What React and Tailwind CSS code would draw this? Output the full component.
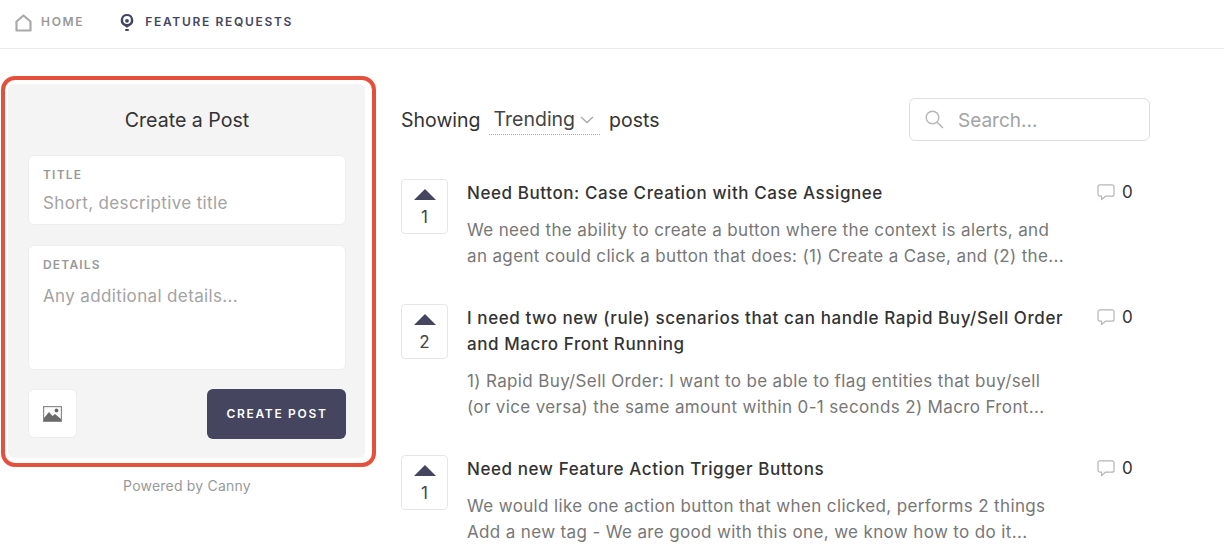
// App.jsx
function VoteBox({ count }) {
  return (
    <div className="w-[47px] h-[55px] shrink-0 rounded border border-[#e6e6e6] bg-white flex flex-col items-center pt-[9px]">
      <svg width="22" height="11" viewBox="0 0 22 11">
        <path d="M11 0 L22 11 L0 11 Z" fill="#454560" />
      </svg>
      <span className="mt-[6px] text-[17px] leading-[22px] text-[#444]">{count}</span>
    </div>
  );
}

function CommentCount() {
  return (
    <div className="w-[36px] shrink-0 flex items-center gap-[7px] text-[17px] leading-[26px] text-[#333]">
      <svg width="18" height="17" viewBox="0 0 18 17" fill="none" stroke="#b5b5b5" strokeWidth="1.200" className="shrink-0">
        <path d="M3 .8h12a2 2 0 0 1 2 2v7.400a2 2 0 0 1-2 2H8.500L4.600 15.600v-3.400H3a2 2 0 0 1-2-2V2.800a2 2 0 0 1 2-2z" strokeLinejoin="round" />
      </svg>
      0
    </div>
  );
}

function Post({ count, title, lines, className }) {
  return (
    <div className={`flex ${className}`}>
      <VoteBox count={count} />
      <div className="w-[598px] ml-[19px] shrink-0 pt-[1px]">
        <div className="text-[17px] leading-[26px] font-[550] tracking-[0.58px] text-[#333] whitespace-pre-line">{title}</div>
        <div className="mt-[11px] text-[17px] leading-[26px] tracking-[0.36px] text-[#777] whitespace-pre-line">{lines}</div>
      </div>
      <div className="ml-[32px]">
        <CommentCount />
      </div>
    </div>
  );
}

export default function App() {
  return (
    <div className="w-[1224px] h-[548px] overflow-hidden bg-white font-['Inter',sans-serif]">
      <header className="h-[49px] border-b border-[#ececec] flex items-center pl-[15px] pb-[4px] text-[12px] font-semibold tracking-[0.14em]">
        <svg width="17" height="18" viewBox="0 0 17 18" fill="none" stroke="#aaa" strokeWidth="2.200" className="mt-[2px]">
          <path d="M1.500 16.500V7.500L8.500 1.500l7 6v9z" strokeLinejoin="round" />
        </svg>
        <span className="ml-[9px] text-[#999]">HOME</span>
        <svg width="14" height="17" viewBox="0 0 14 17" className="ml-[36px]">
          <path d="M7 0a6.300 6.300 0 0 1 2.600 12L7 13.800 4.400 12A6.300 6.300 0 0 1 7 0z" fill="#454560" />
          <circle cx="7" cy="6" r="3.900" fill="#fff" />
          <circle cx="7" cy="6.800" r="1.900" fill="#454560" />
          <rect x="5" y="15" width="4" height="2" rx="1" fill="#454560" />
        </svg>
        <span className="ml-[11px] text-[#454560]">FEATURE REQUESTS</span>
      </header>

      <div className="flex items-start pt-[27px] pl-[1px]">
        <div className="w-[375px] shrink-0">
          <div className="h-[391px] rounded-[14px] border-[4px] border-[#e5503c] bg-white pt-[4px] pl-[3px] pr-[7px] pb-[5px]">
            <div className="h-full rounded-md bg-[#f4f4f4] pl-[20px] pr-[19px] flex flex-col">
              <h2 className="mt-[23px] text-center text-[19.600px] leading-[26px] font-normal text-[#333]">Create a Post</h2>
              <div className="mt-[22px] h-[70px] rounded-md bg-white border border-[#eeeeee] px-[14px] pt-[12px]">
                <div className="text-[12px] leading-[14px] font-semibold tracking-[0.1em] text-[#999]">TITLE</div>
                <div className="mt-[9px] text-[17px] leading-[24px] tracking-[0.36px] text-[#a3a3a3]">Short, descriptive title</div>
              </div>
              <div className="mt-[20px] h-[125px] rounded-md bg-white border border-[#eeeeee] px-[14px] pt-[12px]">
                <div className="text-[12px] leading-[14px] font-semibold tracking-[0.1em] text-[#999]">DETAILS</div>
                <div className="mt-[12px] text-[17px] leading-[24px] tracking-[0.36px] text-[#a3a3a3]">Any additional details...</div>
              </div>
              <div className="mt-[19px] flex items-start justify-between">
                <div className="w-[49px] h-[49px] rounded-md bg-white border border-[#eeeeee] flex items-center justify-center">
                  <svg width="19" height="16" viewBox="0 0 19 16">
                    <rect x=".6" y=".6" width="17.800" height="14.800" fill="none" stroke="#8a8a8a" strokeWidth="1.200" />
                    <path d="M1 15v-3l5-6 3.500 4 2.500-2 6 5v2z" fill="#6a6a6a" />
                    <circle cx="13.500" cy="4.500" r="1.900" fill="#6a6a6a" />
                  </svg>
                </div>
                <button className="w-[139px] h-[50px] rounded-md bg-[#454560] pl-[1px] text-white text-[12px] font-semibold tracking-[0.14em]">
                  CREATE POST
                </button>
              </div>
            </div>
          </div>
          <p className="mt-[10px] pr-[3px] text-center text-[14px] leading-[18px] tracking-[0.015em] text-[#999]">Powered by Canny</p>
        </div>

        <main className="ml-[25px] w-[749px]">
          <div className="h-[43px] mt-[22px] flex items-center text-[19.500px] text-[#333] w-[749px]">
            <span className="pt-[2px]">Showing</span>
            <span className="ml-[8px] -mt-[2px] flex items-center gap-[5px] border-b border-dotted border-[#aaa] h-[32px] pl-[5px] pr-[6px] pt-[3px] text-[#444]">
              Trending
              <svg width="14" height="8" viewBox="0 0 14 8" fill="none" stroke="#aaa" strokeWidth="1.500" className="mt-[1px]">
                <path d="M1 1l6 5.500L13 1" />
              </svg>
            </span>
            <span className="ml-[9px] pt-[2px]">posts</span>
            <div className="ml-auto w-[241px] h-[43px] rounded-md border border-[#dedede] flex items-center pl-[15px] text-[19px] text-[#a3a3a3]">
              <svg width="19" height="19" viewBox="0 0 19 19" fill="none" stroke="#b5b5b5" strokeWidth="1.400">
                <circle cx="7.500" cy="7.500" r="6.300" />
                <path d="M12 12l6 6" />
              </svg>
              <span className="ml-[14px] pt-[3px]">Search...</span>
            </div>
          </div>
          <Post
            className="mt-[38px]"
            count="1"
            title="Need Button: Case Creation with Case Assignee"
            lines={'We need the ability to create a button where the context is alerts, and\nan agent could click a button that does: (1) Create a Case, and (2) the...'}
          />
          <Post
            className="mt-[35px]"
            count="2"
            title={'I need two new (rule) scenarios that can handle Rapid Buy/Sell Order\nand Macro Front Running'}
            lines={'1) Rapid Buy/Sell Order: I want to be able to flag entities that buy/sell\n(or vice versa) the same amount within 0-1 seconds 2) Macro Front...'}
          />
          <Post
            className="mt-[35px]"
            count="1"
            title="Need new Feature Action Trigger Buttons"
            lines={'We would like one action button that when clicked, performs 2 things\nAdd a new tag - We are good with this one, we know how to do it...'}
          />
        </main>
      </div>
    </div>
  );
}
